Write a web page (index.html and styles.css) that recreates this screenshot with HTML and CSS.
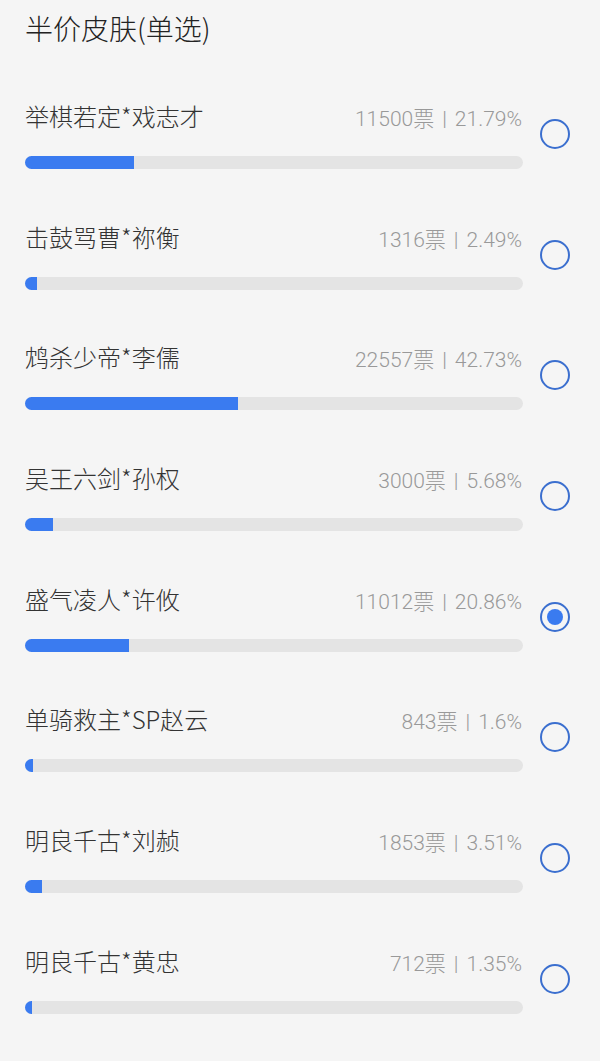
FILE: index.html
```html
<!DOCTYPE html>
<html lang="zh-CN">
<head>
    <meta charset="UTF-8">
    <meta name="viewport" content="width=device-width, initial-scale=1.0">
    <title>半价皮肤</title>
    <link rel="stylesheet" href="styles.css">
</head>
<body>

    <h1 class="title">半价皮肤(单选)</h1>

    <div class="vote-list">
        <div class="option">
            <div class="option-main">
                <div class="option-head">
                    <span class="name">举棋若定*戏志才</span>
                    <span class="stat">11500票<i class="sep">|</i>21.79%</span>
                </div>
                <div class="track"><div class="fill" style="width: 21.79%"></div></div>
            </div>
            <span class="radio"></span>
        </div>

        <div class="option">
            <div class="option-main">
                <div class="option-head">
                    <span class="name">击鼓骂曹*祢衡</span>
                    <span class="stat">1316票<i class="sep">|</i>2.49%</span>
                </div>
                <div class="track"><div class="fill" style="width: 2.49%"></div></div>
            </div>
            <span class="radio"></span>
        </div>

        <div class="option">
            <div class="option-main">
                <div class="option-head">
                    <span class="name">鸩杀少帝*李儒</span>
                    <span class="stat">22557票<i class="sep">|</i>42.73%</span>
                </div>
                <div class="track"><div class="fill" style="width: 42.73%"></div></div>
            </div>
            <span class="radio"></span>
        </div>

        <div class="option">
            <div class="option-main">
                <div class="option-head">
                    <span class="name">吴王六剑*孙权</span>
                    <span class="stat">3000票<i class="sep">|</i>5.68%</span>
                </div>
                <div class="track"><div class="fill" style="width: 5.68%"></div></div>
            </div>
            <span class="radio"></span>
        </div>

        <div class="option">
            <div class="option-main">
                <div class="option-head">
                    <span class="name">盛气凌人*许攸</span>
                    <span class="stat">11012票<i class="sep">|</i>20.86%</span>
                </div>
                <div class="track"><div class="fill" style="width: 20.86%"></div></div>
            </div>
            <span class="radio checked"></span>
        </div>

        <div class="option">
            <div class="option-main">
                <div class="option-head">
                    <span class="name">单骑救主*SP赵云</span>
                    <span class="stat">843票<i class="sep">|</i>1.6%</span>
                </div>
                <div class="track"><div class="fill" style="width: 1.6%"></div></div>
            </div>
            <span class="radio"></span>
        </div>

        <div class="option">
            <div class="option-main">
                <div class="option-head">
                    <span class="name">明良千古*刘赪</span>
                    <span class="stat">1853票<i class="sep">|</i>3.51%</span>
                </div>
                <div class="track"><div class="fill" style="width: 3.51%"></div></div>
            </div>
            <span class="radio"></span>
        </div>

        <div class="option">
            <div class="option-main">
                <div class="option-head">
                    <span class="name">明良千古*黄忠</span>
                    <span class="stat">712票<i class="sep">|</i>1.35%</span>
                </div>
                <div class="track"><div class="fill" style="width: 1.35%"></div></div>
            </div>
            <span class="radio"></span>
        </div>
    </div>

</body>
</html>
```

FILE: styles.css
```css
body {
    font-family: "Noto Sans CJK SC", "Noto Sans", sans-serif;
    margin: 0;
    padding: 0;
    background-color: #f5f5f5;
    color: #333;
}
.title {
    margin: 0;
    padding: 8px 0 0 25px;
    font-size: 28px;
    font-weight: 300;
    line-height: 40px;
    color: #222;
}
.vote-list {
    margin-top: 52px;
}
.option {
    display: flex;
    align-items: flex-start;
    height: 120.7px;
    padding-left: 25px;
}
.option-main {
    width: 498px;
}
.option-head {
    display: flex;
    justify-content: space-between;
    align-items: baseline;
    height: 32px;
    line-height: 32px;
}
.name {
    font-size: 24px;
    font-weight: 300;
    color: #333;
}
.stat {
    font-family: Roboto, "Noto Sans CJK SC", sans-serif;
    font-size: 21px;
    font-weight: 300;
    color: #999;
    padding-right: 1px;
}
.sep {
    font-style: normal;
    padding: 0 8px;
}
.track {
    margin-top: 24px;
    height: 13px;
    background-color: #e4e4e4;
    border-radius: 7px;
    overflow: hidden;
}
.fill {
    height: 100%;
    background-color: #3a7bf0;
}
.radio {
    box-sizing: border-box;
    width: 30px;
    height: 30px;
    margin: 19px 0 0 17px;
    border: 2px solid #3b6fcf;
    border-radius: 50%;
    display: flex;
    align-items: center;
    justify-content: center;
}
.radio.checked::after {
    content: "";
    width: 16px;
    height: 16px;
    border-radius: 50%;
    background-color: #3a7bf0;
}
```
